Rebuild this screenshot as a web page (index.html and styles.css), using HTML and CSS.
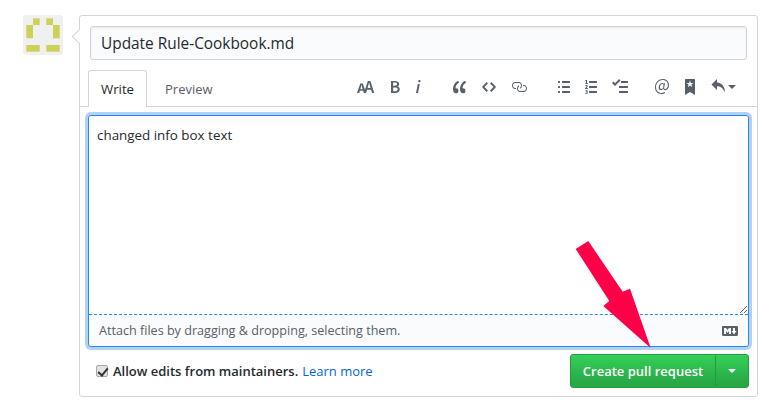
FILE: index.html
```html
<!DOCTYPE html>
<html lang="en">
<head>
<meta charset="utf-8">
<title>Update Rule-Cookbook.md</title>
<link rel="stylesheet" href="styles.css">
</head>
<body>
<main class="discussion">
  <svg class="avatar" viewBox="0 0 40 40" aria-label="avatar">
    <rect width="40" height="40" rx="3" fill="#f0f0f0"/>
    <g fill="#cdd15a">
      <rect x="10" y="3.3" width="6.7" height="6.7"/>
      <rect x="23.3" y="3.3" width="6.7" height="6.7"/>
      <rect x="3.3" y="10" width="6.7" height="13.3"/>
      <rect x="30" y="10" width="6.7" height="13.3"/>
      <rect x="3.3" y="30" width="13.4" height="6.7"/>
      <rect x="23.3" y="30" width="13.4" height="6.7"/>
    </g>
  </svg>
  <form class="box">
    <div class="title-wrap"><input class="title" type="text" value="Update Rule-Cookbook.md"></div>
    <div class="tabbar">
      <div class="tabs">
        <span class="tab tab-active">Write</span>
        <span class="tab">Preview</span>
      </div>
      <div class="toolbar">
        <div class="tool-group">
          <svg class="icon w18" viewBox="0 0 18 16"><path d="M13.62 9.08L12.1 3.66h-.06l-1.5 5.42h3.08zM5.7 10.13S4.68 6.52 4.53 6.02h-.08l-1.13 4.11H5.7zM17.31 14h-2.25l-.95-3.25h-4.07L9.09 14H6.84l-.69-2.33H2.87L2.17 14H0l3.3-9.59h2.5l2.17 6.34L10.86 2h2.52l3.93 12z"/></svg>
          <svg class="icon w10" viewBox="0 0 10 16"><path d="M1 2h3.83c2.48 0 4.3.75 4.3 2.95 0 1.14-.63 2.23-1.67 2.61v.06c1.33.3 2.3 1.23 2.3 2.86 0 2.39-1.97 3.52-4.61 3.52H1V2zm3.66 4.81c1.66 0 2.38-.66 2.38-1.69 0-1.17-.78-1.61-2.34-1.61H3.13v3.3h1.53zm.27 5.39c1.77 0 2.75-.64 2.75-1.98 0-1.27-.95-1.81-2.75-1.81h-1.8v3.8h1.8v-.01z"/></svg>
          <svg class="icon w6" viewBox="0 0 6 16"><path d="M2.81 5h1.98L3 14H1l1.81-9zm.36-2.7c0-.7.58-1.3 1.33-1.3.56 0 1.13.38 1.13 1.03 0 .75-.59 1.3-1.33 1.3-.58 0-1.13-.38-1.13-1.03z"/></svg>
        </div>
        <div class="tool-group group-code">
          <svg class="icon w14" viewBox="0 0 14 16"><path d="M6.16 3.5C3.73 5.06 2.55 6.67 2.55 9.36c.16-.05.3-.05.44-.05 1.27 0 2.5.86 2.5 2.41 0 1.61-1.03 2.61-2.5 2.61-1.9 0-2.99-1.52-2.99-4.25 0-3.8 1.75-6.53 5.02-8.42L6.16 3.5zm7 0c-2.43 1.56-3.61 3.17-3.61 5.86.16-.05.3-.05.44-.05 1.27 0 2.5.86 2.5 2.41 0 1.61-1.03 2.61-2.5 2.61-1.89 0-2.98-1.52-2.98-4.25 0-3.8 1.75-6.53 5.02-8.42l1.14 1.84h-.01z"/></svg>
          <svg class="icon w14" viewBox="0 0 14 16"><path d="M9.5 3L8 4.5 11.5 8 8 11.5 9.5 13 14 8 9.5 3zm-5 0L0 8l4.5 5L6 11.5 2.5 8 6 4.5 4.5 3z"/></svg>
          <svg class="icon w16" viewBox="0 0 16 16"><path d="M4 9h1v1H4c-1.5 0-3-1.69-3-3.5S2.55 3 4 3h4c1.45 0 3 1.69 3 3.5 0 1.41-.91 2.72-2 3.25V8.59c.58-.45 1-1.27 1-2.09C10 5.22 8.98 4 8 4H4c-.98 0-2 1.22-2 2.5S3 9 4 9zm9-3h-1v1h1c1 0 2 1.22 2 2.5S13.98 12 13 12H9c-.98 0-2-1.22-2-2.5 0-.83.42-1.64 1-2.09V6.25c-1.09.53-2 1.84-2 3.25C6 11.31 7.55 13 9 13h4c1.45 0 3-1.69 3-3.5S14.5 6 13 6z"/></svg>
        </div>
        <div class="tool-group">
          <svg class="icon w12" viewBox="0 0 12 16"><path d="M2 13c0 .59 0 1-.59 1H.59C0 14 0 13.59 0 13c0-.59 0-1 .59-1h.81c.59 0 .59.41.59 1H2zm2.59-9h6.81c.59 0 .59-.41.59-1 0-.59 0-1-.59-1H4.59C4 2 4 2.41 4 3c0 .59 0 1 .59 1zM1.41 7H.59C0 7 0 7.41 0 8c0 .59 0 1 .59 1h.81c.59 0 .59-.41.59-1 0-.59 0-1-.59-1h.01zm0-5H.59C0 2 0 2.41 0 3c0 .59 0 1 .59 1h.81c.59 0 .59-.41.59-1 0-.59 0-1-.59-1h.01zm10 5H4.59C4 7 4 7.41 4 8c0 .59 0 1 .59 1h6.81c.59 0 .59-.41.59-1 0-.59 0-1-.59-1h.01zm0 5H4.59C4 12 4 12.41 4 13c0 .59 0 1 .59 1h6.81c.59 0 .59-.41.59-1 0-.59 0-1-.59-1h.01z"/></svg>
          <svg class="icon w12" viewBox="0 0 12 16"><path d="M12.01 13c0 .59 0 1-.59 1H4.6c-.59 0-.59-.41-.59-1 0-.59 0-1 .59-1h6.81c.59 0 .59.41.59 1h.01zM4.6 4h6.81C12 4 12 3.59 12 3c0-.59 0-1-.59-1H4.6c-.59 0-.59.41-.59 1 0 .59 0 1 .59 1zm6.81 3H4.6c-.59 0-.59.41-.59 1 0 .59 0 1 .59 1h6.81C12 9 12 8.59 12 8c0-.59 0-1-.59-1zm-9.4-6h-.72c-.3.19-.58.25-1.03.34V2h.75v2.14H.17V5h2.84v-.86h-1V1zm.19 8.13c-.17 0-.45.03-.66.06.53-.56 1.14-1.25 1.14-1.89C2.67 6.5 2.11 6 1.3 6 .72 6 .33 6.2 0 6.75l.49.49c.16-.25.33-.45.59-.45.28 0 .47.16.47.47 0 .53-.73 1.23-1.54 2.16V10H2.98l-.08-.88h-.7zm-.08 3.78v-.03c.44-.19.64-.47.64-.86 0-.7-.56-1.11-1.44-1.11-.48 0-.89.19-1.28.52l.55.64c.25-.2.44-.31.69-.31.27 0 .42.13.42.36 0 .27-.2.44-.86.44v.75c.83 0 .98.17.98.47 0 .25-.23.38-.58.38-.28 0-.56-.14-.81-.38l-.48.66c.3.36.77.56 1.41.56.83 0 1.53-.41 1.53-1.16 0-.5-.31-.81-.77-.94z"/></svg>
          <svg class="icon w16" viewBox="0 0 16 16"><path d="M15.41 9H7.59C7 9 7 8.59 7 8c0-.59 0-1 .59-1h7.81c.59 0 .59.41.59 1 0 .59 0 1-.59 1h.01zM9.59 4C9 4 9 3.59 9 3c0-.59 0-1 .59-1h5.81c.59 0 .59.41.59 1 0 .59 0 1-.59 1H9.59zM0 3.91l1.41-1.3L3 4.2 7.09 0 8.5 1.41 3 6.91l-3-3zM7.59 12h7.81c.59 0 .59.41.59 1 0 .59 0 1-.59 1H7.59C7 14 7 13.59 7 13c0-.59 0-1 .59-1z"/></svg>
        </div>
        <div class="tool-group group-refs">
          <svg class="icon w14" viewBox="0 0 14 16"><path d="M6.58 15c1.25 0 2.52-.31 3.56-.94l-.42-.94c-.84.52-1.89.83-3.03.83-3.23 0-5.64-2.08-5.64-5.72 0-4.37 3.23-7.18 6.58-7.18 3.45 0 5.22 2.19 5.22 5.2 0 2.39-1.34 3.86-2.5 3.86-1.05 0-1.36-.73-1.05-2.19l.73-3.75H8.98l-.11.72c-.41-.63-.94-.83-1.56-.83-2.19 0-3.66 2.39-3.66 4.38 0 1.67.94 2.61 2.3 2.61.84 0 1.67-.53 2.3-1.25.11.94.94 1.45 1.98 1.45 1.67 0 3.77-1.67 3.77-5C14 2.61 11.59 0 7.83 0 3.66 0 0 3.33 0 8.33 0 12.71 2.92 15 6.58 15zm-.31-5c-.73 0-1.36-.52-1.36-1.67 0-1.45.94-3.22 2.41-3.22.52 0 .84.2 1.25.83l-.52 3.02c-.63.73-1.15 1.05-1.78 1.05V10z"/></svg>
          <svg class="icon w10" viewBox="0 0 10 16"><path d="M9 0H1C.27 0 0 .27 0 1v15l5-3.09L10 16V1c0-.73-.27-1-1-1zm-.78 4.25L6.36 5.61l.72 2.16c.06.22-.02.28-.2.17L5 6.6 3.12 7.94c-.19.11-.25.05-.2-.17l.72-2.16-1.86-1.36c-.17-.16-.14-.23.09-.23l2.3-.03.7-2.16h.25l.7 2.16 2.3.03c.23 0 .27.08.09.23h.01z"/></svg>
          <span class="reply">
            <svg class="icon w14" viewBox="0 0 14 16"><path d="M6 3.5c3.92.44 8 3.125 8 10-2.312-5.062-4.75-6.25-8-6.25V11L.5 5.5 6 0v3.5z"/></svg>
            <span class="caret caret-grey"></span>
          </span>
        </div>
      </div>
    </div>
    <div class="editor-wrap">
      <div class="editor">
        <textarea class="textarea">changed info box text</textarea>
        <div class="dropbar">
          <span>Attach files by dragging &amp; dropping, selecting them.</span>
          <svg class="md" viewBox="0 0 16 10"><path d="M14.85 0H1.15C.52 0 0 .52 0 1.15v7.69C0 9.48.52 10 1.15 10h13.69c.64 0 1.15-.52 1.15-1.15v-7.7C16 .52 15.48 0 14.85 0zM9 8H7V5L5.5 6.92 4 5v3H2V2h2l1.5 2L7 2h2v6zm2.99.5L9.5 5H11V2h2v3h1.5l-2.51 3.5z"/></svg>
        </div>
      </div>
    </div>
    <div class="actions">
      <label class="allow"><input class="check" type="checkbox" checked><strong>Allow edits from maintainers.</strong><a class="learn" href="#">Learn more</a></label>
      <div class="btn-group">
        <span class="btn btn-main">Create pull request</span>
        <span class="btn btn-drop"><span class="caret caret-white"></span></span>
      </div>
    </div>
  </form>
</main>
<svg class="arrow" viewBox="0 0 780 406"><polygon points="575.7,249 588.3,241 622.7,291.7 630,288.7 650.7,348 603.3,306 609.3,301" fill="#ff0048"/></svg>
</body>
</html>
```
FILE: styles.css
```css
* { box-sizing: border-box; }
html, body { margin: 0; height: 406px; overflow: hidden; background: #fff; }
body {
  position: relative;
  font-family: "Open Sans", "Noto Sans", sans-serif;
  font-size: 13px;
  color: #24292e;
}
.discussion { display: flex; gap: 16px; padding: 15px 0 0 23px; }
.avatar { width: 40px; height: 40px; flex: none; }
.box {
  position: relative;
  width: 679px;
  height: 382px;
  border: 1px solid #d1d5da;
  border-radius: 3px;
  background: #fff;
}
.box::before {
  content: "";
  position: absolute;
  left: -6px;
  top: 15px;
  width: 10px;
  height: 10px;
  transform: rotate(45deg);
  background: #fff;
  border-left: 1px solid #d1d5da;
  border-bottom: 1px solid #d1d5da;
}
.title-wrap { position: relative; padding: 10px 10px 0; }
.title {
  display: block;
  width: 100%;
  height: 34px;
  padding: 0 10px;
  border: 1px solid #d1d5da;
  border-radius: 3px;
  background: #fafbfc;
  font: 15.4px "Open Sans", "Noto Sans", sans-serif;
  color: #24292e;
  box-shadow: inset 0 1px 2px rgba(27,31,35,.075);
}
.tabbar {
  position: relative;
  display: flex;
  align-items: flex-end;
  justify-content: space-between;
  height: 47px;
  padding: 10px 0 0 8px;
  border-bottom: 1px solid #d1d5da;
}
.tabs { display: flex; margin-bottom: -1px; }
.tab {
  display: block;
  height: 37px;
  padding: 0 17px;
  line-height: 37px;
  font-size: 13px;
  color: #586069;
  border: 1px solid transparent;
  border-bottom: 0;
}
.tab-active {
  padding: 0 12px;
  width: 59px;
  font-size: 13.2px;
  color: #24292e;
  background: #fff;
  border-color: #d1d5da;
  border-radius: 3px 3px 0 0;
}
.toolbar {
  display: flex;
  align-items: center;
  gap: 31px;
  height: 16px;
  margin: 0 21px 11px 0;
}
.tool-group { display: flex; align-items: center; gap: 15px; }
.group-code { margin-left: 1px; }
.group-refs { margin-left: -4px; gap: 16px; }
.icon { display: block; height: 16px; fill: #586069; flex: none; }
.w6 { width: 6px; }
.w10 { width: 10px; }
.w12 { width: 12px; }
.w14 { width: 14px; }
.w16 { width: 16px; }
.w18 { width: 18px; }
.reply { display: flex; align-items: center; gap: 3px; }
.caret {
  display: block;
  width: 0;
  height: 0;
  border-style: solid;
  border-width: 4px 4px 0;
  border-color: #586069 transparent transparent;
}
.caret-white { border-top-color: #fff; }
.editor-wrap { padding: 8px 8px 0; }
.editor {
  display: flex;
  flex-direction: column;
  width: 661px;
  height: 232px;
  border: 1px solid #2188ff;
  border-radius: 3px;
  box-shadow: 0 0 0 3px rgba(3,102,214,.3);
  background: #fff;
}
.textarea {
  display: block;
  flex: 1;
  width: 100%;
  min-height: 0;
  padding: 9px 8px;
  border: 0;
  border-bottom: 1px dashed #2188ff;
  border-radius: 3px 3px 0 0;
  outline: 0;
  resize: vertical;
  font: 13.4px/20px "Open Sans", "Noto Sans", sans-serif;
  color: #24292e;
  background: #fff;
}
.dropbar {
  display: flex;
  align-items: center;
  justify-content: space-between;
  height: 31px;
  padding: 0 10px;
  background: #fafbfc;
  border-radius: 0 0 3px 3px;
  font-size: 12.6px;
  color: #586069;
}
.md { display: block; width: 16px; height: 10px; fill: #586069; }
.actions {
  display: flex;
  align-items: center;
  justify-content: space-between;
  padding: 7px 8px 0 16px;
}
.allow { display: flex; align-items: center; }
.check {
  appearance: none;
  position: relative;
  width: 12px;
  height: 12px;
  margin: 0 5px 0 0;
  border: 1px solid #a8a8a8;
  border-radius: 2px;
  background: #e2e2e2;
}
.check::before {
  content: "";
  position: absolute;
  left: 3px;
  top: 0;
  width: 4px;
  height: 8px;
  border: solid #333;
  border-width: 0 2px 2px 0;
  transform: rotate(40deg);
}
.allow strong { font-size: 13px; font-weight: 600; color: #24292e; }
.learn { margin-left: 4px; font-size: 13px; color: #0366d6; text-decoration: none; }
.btn-group { display: flex; height: 34px; }
.btn {
  display: flex;
  align-items: center;
  justify-content: center;
  height: 34px;
  color: #fff;
  font-weight: 600;
  font-size: 13px;
  border: 1px solid #259a3f;
  background: linear-gradient(#34d058, #28a745 90%);
}
.btn-main { width: 146px; border-radius: 3px 0 0 3px; }
.btn-drop { width: 34px; margin-left: -1px; border-radius: 0 3px 3px 0; }
.arrow { position: absolute; left: 0; top: 0; width: 780px; height: 406px; pointer-events: none; }
```
